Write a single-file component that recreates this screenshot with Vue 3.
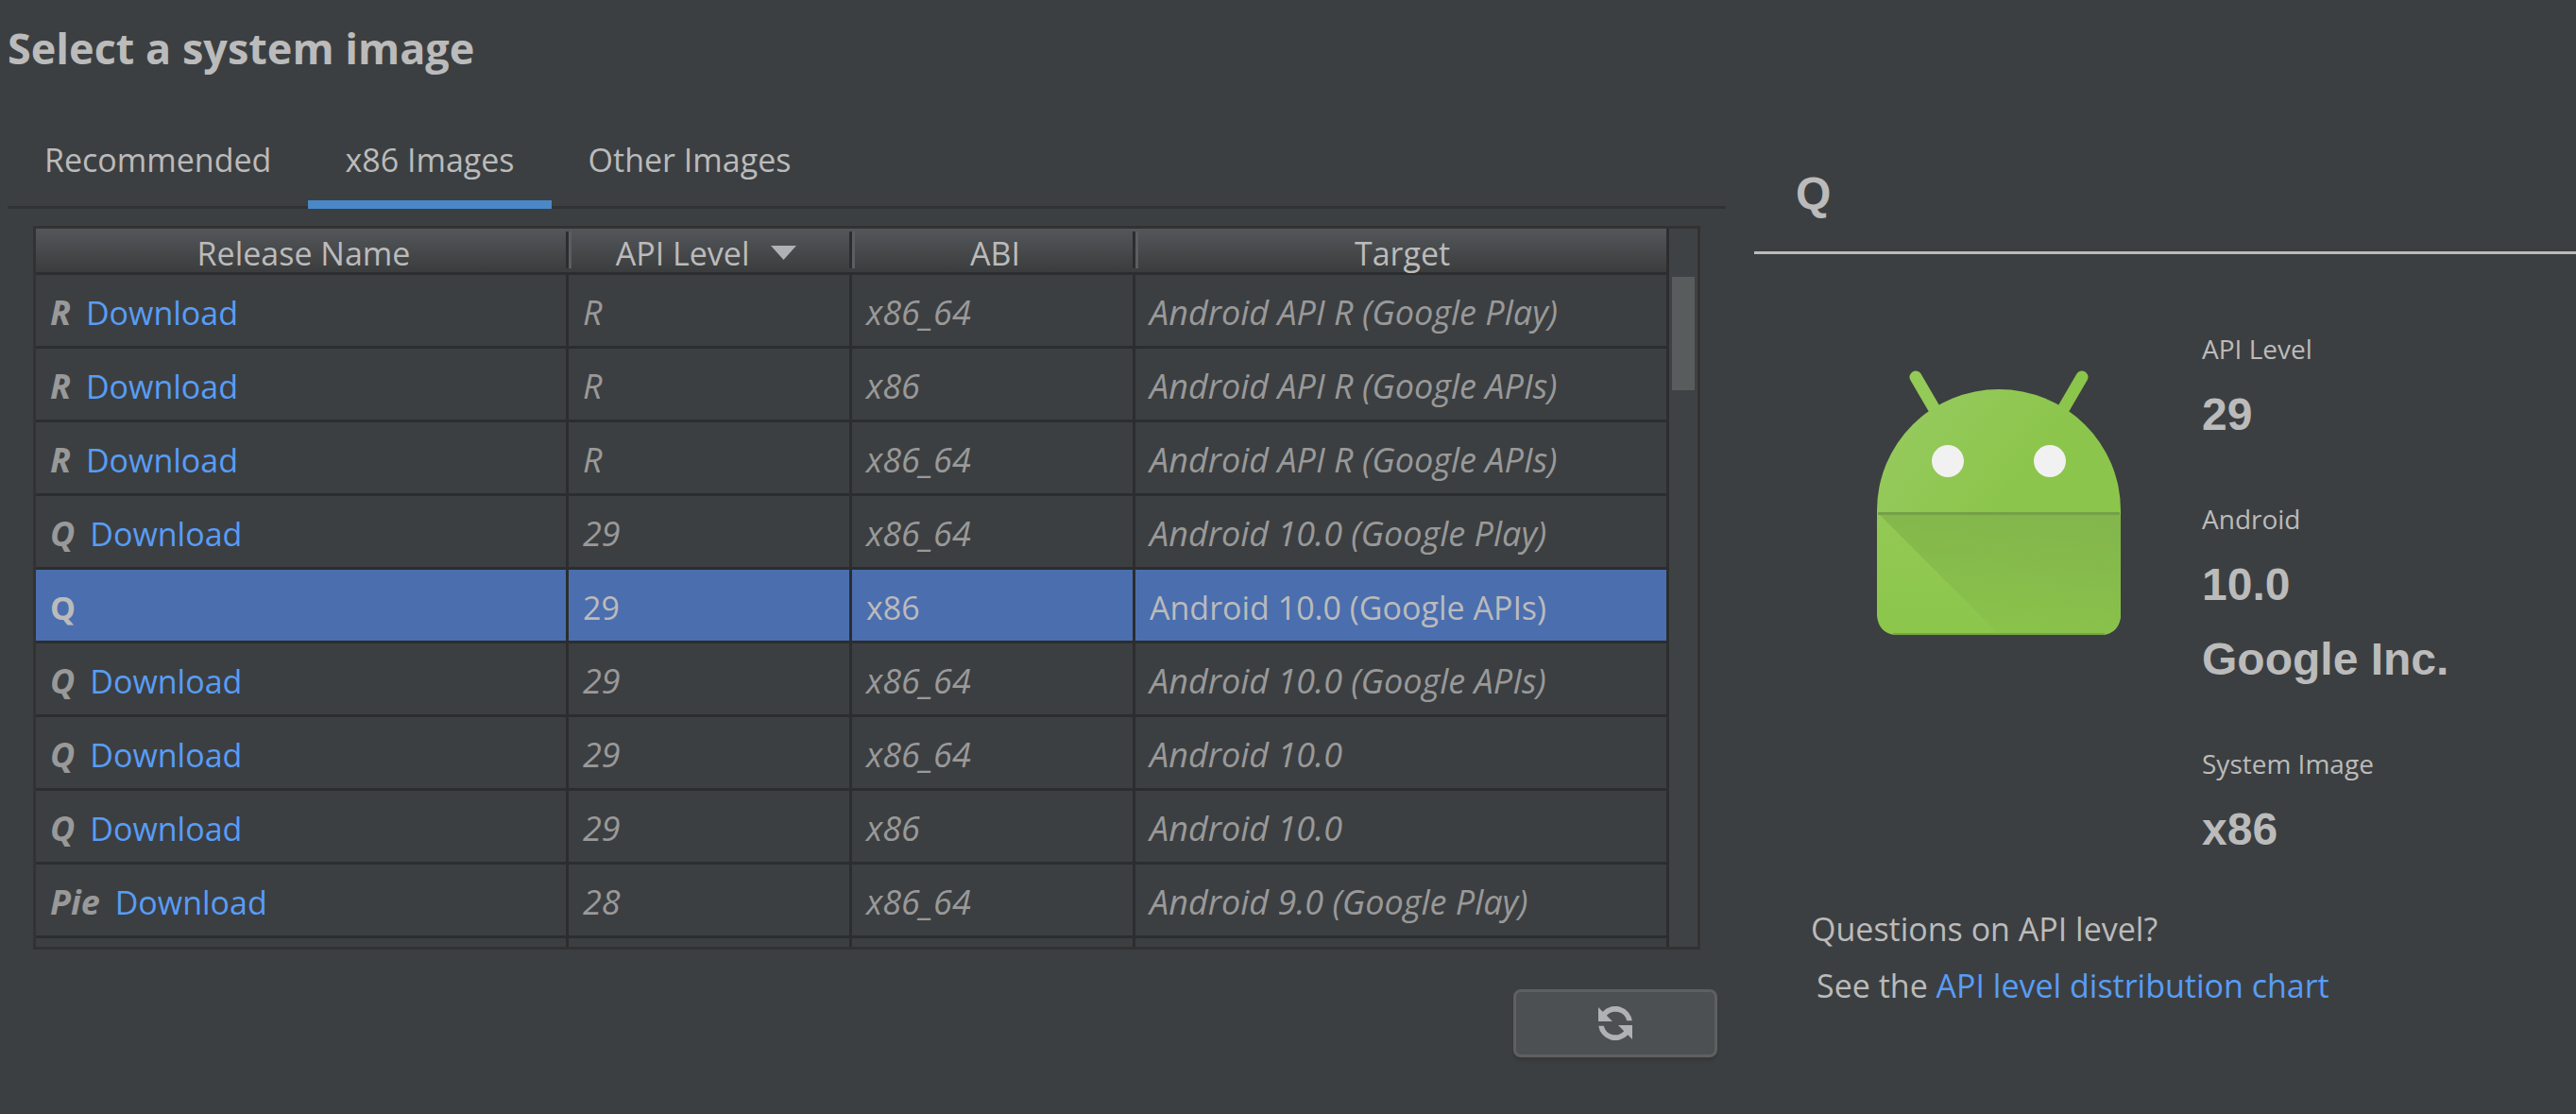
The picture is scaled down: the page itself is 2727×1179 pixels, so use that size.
<script setup>
import { ref } from 'vue'

const tabs = ['Recommended', 'x86 Images', 'Other Images']
const activeTab = ref('x86 Images')

const images = [
  { release: 'R', api: 'R', abi: 'x86_64', target: 'Android API R (Google Play)' },
  { release: 'R', api: 'R', abi: 'x86', target: 'Android API R (Google APIs)' },
  { release: 'R', api: 'R', abi: 'x86_64', target: 'Android API R (Google APIs)' },
  { release: 'Q', api: '29', abi: 'x86_64', target: 'Android 10.0 (Google Play)' },
  { release: 'Q', api: '29', abi: 'x86', target: 'Android 10.0 (Google APIs)', installed: true },
  { release: 'Q', api: '29', abi: 'x86_64', target: 'Android 10.0 (Google APIs)' },
  { release: 'Q', api: '29', abi: 'x86_64', target: 'Android 10.0' },
  { release: 'Q', api: '29', abi: 'x86', target: 'Android 10.0' },
  { release: 'Pie', api: '28', abi: 'x86_64', target: 'Android 9.0 (Google Play)' },
]
const selected = ref(4)
</script>

<template>
  <main class="wizard">
    <section class="chooser">
      <h1>Select a system image</h1>
      <nav class="tabs" role="tablist">
        <button
          v-for="tab in tabs"
          :key="tab"
          type="button"
          role="tab"
          class="tab"
          :class="{ active: tab === activeTab }"
          :aria-selected="tab === activeTab"
          @click="activeTab = tab"
        >{{ tab }}</button>
      </nav>

      <div class="frame">
        <table>
          <colgroup>
            <col class="wide" />
            <col class="narrow" />
            <col class="narrow" />
            <col />
          </colgroup>
          <thead>
            <tr>
              <th scope="col">Release Name</th>
              <th scope="col" aria-sort="descending">
                API Level
                <svg class="sort" viewBox="0 0 27 15" aria-hidden="true"><path d="M0 0H27L13.5 15Z" fill="#afb1b3" /></svg>
              </th>
              <th scope="col">ABI</th>
              <th scope="col">Target</th>
            </tr>
          </thead>
          <tbody>
            <tr
              v-for="(image, i) in images"
              :key="i"
              :class="{ remote: !image.installed, selected: i === selected }"
              @click="selected = i"
            >
              <td>
                <b>{{ image.release }}</b>
                <a v-if="!image.installed" href="#" @click.prevent>Download</a>
              </td>
              <td>{{ image.api }}</td>
              <td>{{ image.abi }}</td>
              <td>{{ image.target }}</td>
            </tr>
            <tr class="peek" aria-hidden="true"><td></td><td></td><td></td><td></td></tr>
          </tbody>
        </table>
        <div class="scrollbar"><div class="thumb"></div></div>
      </div>

      <button type="button" class="refresh" aria-label="Refresh">
        <svg viewBox="0 0 36 36" fill="#afb1b3" aria-hidden="true">
          <path d="M0 1L4.700 5.700A18 18 0 0 1 35.800 15.300H30.200A12.500 12.500 0 0 0 8.800 9.800L15 16H0Z" />
          <path d="M36 35L31.300 30.300A18 18 0 0 1 .200 20.700H5.800A12.500 12.500 0 0 0 27.200 26.200L21 20H36Z" />
        </svg>
      </button>
    </section>

    <aside class="details">
      <h2>Q</h2>
      <div class="summary">
        <svg class="robot" viewBox="0 0 258 280" aria-hidden="true">
          <defs>
            <linearGradient id="skin" x1="0" y1="0.200" x2="1" y2="0.600">
              <stop offset="0" stop-color="#97cb60" />
              <stop offset="0.700" stop-color="#8cc54b" />
            </linearGradient>
            <linearGradient id="body" x1="0" y1="0" x2="0" y2="1">
              <stop offset="0" stop-color="#93c955" />
              <stop offset="1" stop-color="#8cc64b" />
            </linearGradient>
            <linearGradient id="shade" x1="0.600" y1="0" x2="0.400" y2="1">
              <stop offset="0" stop-color="#83b64c" />
              <stop offset="1" stop-color="#8ac34b" />
            </linearGradient>
          </defs>
          <path d="M41 7L62 43" stroke="#93ca58" stroke-width="13" stroke-linecap="round" />
          <path d="M217 7L196 43" stroke="#8cc54b" stroke-width="13" stroke-linecap="round" />
          <path d="M0 152V148A129 128 0 0 1 258 148V152Z" fill="url(#skin)" />
          <path d="M0 151H258V260Q256 278 239 280H19Q2 278 0 260Z" fill="url(#body)" />
          <path d="M2 152H258V260Q256 278 239 280H130Z" fill="url(#shade)" />
          <path d="M1 151.500H257" stroke="#74a047" stroke-width="3" />
          <path d="M17 279H241" stroke="#75a544" stroke-width="2" />
          <circle cx="75" cy="96" r="17" fill="#f1f1f1" />
          <circle cx="183" cy="96" r="17" fill="#f1f1f1" />
        </svg>
        <dl>
          <div>
            <dt>API Level</dt>
            <dd>29</dd>
          </div>
          <div>
            <dt>Android</dt>
            <dd>10.0</dd>
            <dd>Google Inc.</dd>
          </div>
          <div>
            <dt>System Image</dt>
            <dd>x86</dd>
          </div>
        </dl>
      </div>
      <div class="help">
        <p>Questions on API level?</p>
        <p class="more">See the <a href="#" @click.prevent>API level distribution chart</a></p>
      </div>
    </aside>
  </main>
</template>

<style>
body {
  background: #3c3f41;
}
</style>

<style scoped>
.wizard {
  display: grid;
  grid-template-columns: 1857fr 870fr;
  min-height: 100vh;
  color: #bbb;
  background: #3c3f41;
  font: 34px/48px "Open Sans", "Noto Sans", sans-serif;
}
h1,
h2,
p,
dl,
dd {
  margin: 0;
}
a {
  color: #589df6;
  text-decoration: none;
}
button {
  font: inherit;
  color: inherit;
  cursor: pointer;
}
.chooser {
  display: flex;
  flex-direction: column;
  min-width: 0;
  padding-top: 21px;
}
h1 {
  padding-left: 8px;
  font-size: 45px;
  line-height: 60px;
}
.tabs {
  display: flex;
  margin: 39px 30px 0 8px;
  box-shadow: inset 0 -3px #323232;
}
.tab {
  padding: 25px 39px 19px;
  border: 0;
  border-bottom: 9px solid transparent;
  background: none;
}
.tab.active {
  border-bottom-color: #4a88c7;
}
.frame {
  display: flex;
  margin: 18px 57px 0 35px;
  border: 3px solid #323232;
}
table {
  flex: 1;
  width: 0;
  table-layout: fixed;
  border-collapse: separate;
  border-spacing: 0;
}
.wide {
  width: 564px;
}
.narrow {
  width: 300px;
}
th {
  position: relative;
  padding: 7px 0 1px 3px;
  border-bottom: 3px solid #2b2d2e;
  background: linear-gradient(#54575a, #3a3c3d) padding-box;
  font-weight: 400;
  line-height: 38px;
}
th:last-child {
  border-right: 3px solid #2b2d2e;
}
th:not(:last-child)::after {
  content: "";
  position: absolute;
  top: 3px;
  right: -3px;
  z-index: 1;
  width: 3px;
  height: 39px;
  border-left: 3px solid #2b2d2e;
  background: #5b5e60;
}
.sort {
  width: 27px;
  height: 15px;
  margin: 0 12px 0 14px;
  vertical-align: 6px;
}
td {
  padding: 6px 15px 1px;
  border-right: 3px solid #2b2d2e;
  border-bottom: 3px solid #2b2d2e;
  line-height: 68px;
  white-space: nowrap;
}
td b {
  margin-right: 16px;
}
.remote td {
  color: #999;
  font-size: 36px;
  font-style: italic;
}
.remote a {
  font-size: 34px;
  font-style: normal;
}
.selected td {
  color: #bbb;
  background: #4b6eaf;
}
.peek td {
  height: 9px;
  padding: 0;
  border-bottom: 0;
  line-height: 0;
}
.scrollbar {
  width: 30px;
  padding: 51px 3px 0;
  box-sizing: border-box;
  background: #3f4244;
}
.thumb {
  height: 120px;
  background: #595c5d;
}
.refresh {
  display: flex;
  align-items: center;
  justify-content: center;
  align-self: flex-end;
  width: 216px;
  height: 72px;
  margin: 42px 39px 0 0;
  border: 3px solid #5e6060;
  border-radius: 8px;
  background: #4c5052;
  box-shadow: 0 4px 3px #36393a;
}
.refresh svg {
  width: 36px;
  height: 36px;
}
.details {
  min-width: 0;
  padding-top: 175px;
}
h2 {
  padding: 0 0 31px 44px;
  border-bottom: 3px solid #bbb;
  font: 700 48px/60px "Liberation Sans", Arial, sans-serif;
}
.summary {
  display: flex;
  align-items: flex-start;
  gap: 86px;
  padding: 82px 0 0 130px;
}
.robot {
  width: 258px;
  height: 280px;
  margin-top: 41px;
  fill: none;
}
dl {
  display: flex;
  flex-direction: column;
  gap: 53px;
}
dt {
  margin-bottom: 12px;
  font-size: 28px;
  line-height: 36px;
}
dd {
  font: 700 48px/79px "Liberation Sans", Arial, sans-serif;
}
.help {
  padding: 36px 0 0 60px;
  line-height: 60px;
}
.more {
  padding-left: 6px;
}
</style>
